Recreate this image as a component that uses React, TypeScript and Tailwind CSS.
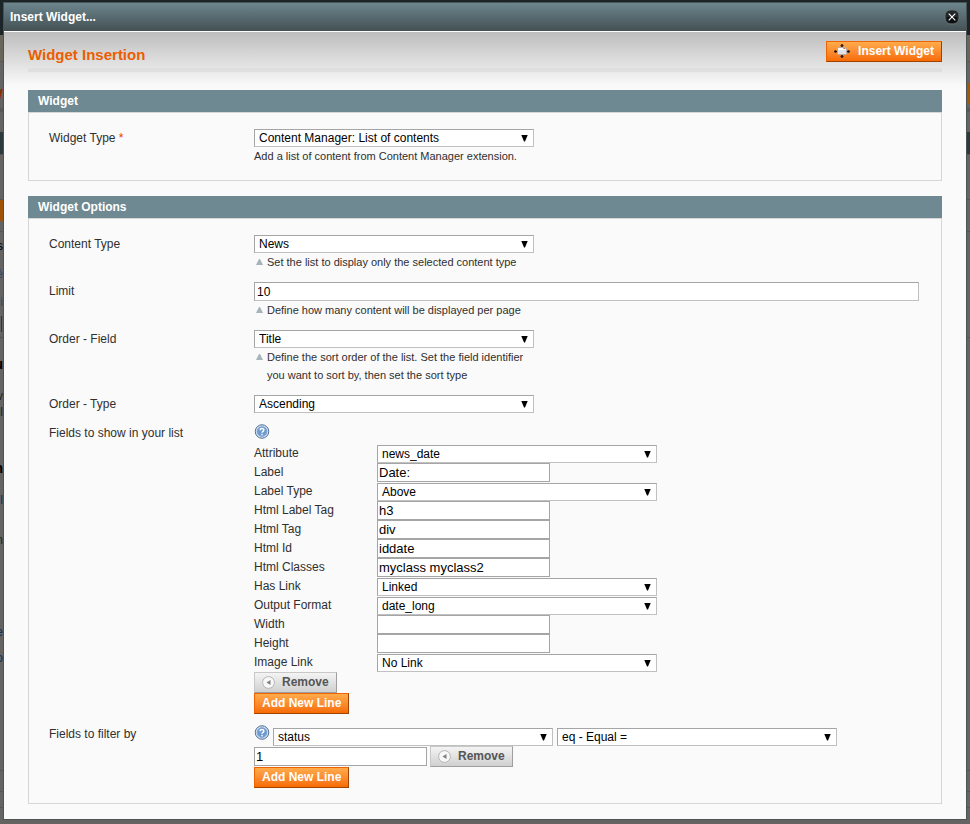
import React, { useId } from 'react';
import clsx from 'clsx';

interface SelectBoxProps {
  id?: string;
  label?: string;
  value: string;
}

interface LineField {
  label: string;
  type: 'select' | 'text';
  value: string;
}

const lineFields: LineField[] = [
  { label: 'Attribute', type: 'select', value: 'news_date' },
  { label: 'Label', type: 'text', value: 'Date:' },
  { label: 'Label Type', type: 'select', value: 'Above' },
  { label: 'Html Label Tag', type: 'text', value: 'h3' },
  { label: 'Html Tag', type: 'text', value: 'div' },
  { label: 'Html Id', type: 'text', value: 'iddate' },
  { label: 'Html Classes', type: 'text', value: 'myclass myclass2' },
  { label: 'Has Link', type: 'select', value: 'Linked' },
  { label: 'Output Format', type: 'select', value: 'date_long' },
  { label: 'Width', type: 'text', value: '' },
  { label: 'Height', type: 'text', value: '' },
  { label: 'Image Link', type: 'select', value: 'No Link' },
];

const inputBorder = 'border border-t-[#a5a5a5] border-l-[#a5a5a5] border-r-[#c0c0c0] border-b-[#c0c0c0]';

const SelectBox = ({ id, label, value }: SelectBoxProps) => (
  <div className="relative h-[18px] w-[280px] max-w-full">
    <select
      id={id}
      aria-label={label}
      defaultValue={value}
      className={clsx(inputBorder, 'block h-full w-full appearance-none bg-white pl-1 pr-5 text-xs/4 text-black')}
    >
      <option>{value}</option>
    </select>
    <svg viewBox="0 0 7 7" className="pointer-events-none absolute right-[6px] top-[6px] size-[7px]" aria-hidden="true">
      <path d="M.3 0h6.400L4 6.500H3z" fill="#000" />
    </svg>
  </div>
);

const TextBox = ({ id, label, value }: SelectBoxProps) => (
  <input
    id={id}
    type="text"
    aria-label={label}
    defaultValue={value}
    className="block h-[19px] w-[173px] border border-[#a5a5a5] bg-white px-px text-[13px]/4 text-black"
  />
);

const HelpIcon = () => (
  <svg viewBox="0 0 16 16" className="block h-[15px] w-4 shrink-0" role="img" aria-label="Help">
    <circle cx="8" cy="8" r="7.2" fill="#d3e2f3" stroke="#48658f" strokeWidth="1" />
    <circle cx="8" cy="8" r="5.2" fill="#6b9bd1" stroke="#7d9fcb" strokeWidth="0.8" />
    <path d="M6 6.600C6 4.200 10 4.200 10 6.500C10 7.900 8 7.800 8 9.400" fill="none" stroke="#fff" strokeWidth="1.500" />
    <circle cx="8" cy="11.300" r="0.900" fill="#fff" />
  </svg>
);

const RemoveButton = () => (
  <button
    type="button"
    className="flex h-[21px] items-center gap-[7px] border border-t-[#c8c8c8] border-l-[#c8c8c8] border-r-[#9f9f9f] border-b-[#9f9f9f] bg-linear-to-b from-[#f4f4f4] to-[#d0d0d0] px-[7px] text-xs/4 font-bold text-[#555]"
  >
    <svg viewBox="0 0 13 13" className="size-[13px]" aria-hidden="true">
      <circle cx="6.5" cy="6.5" r="5.9" fill="#f8f8f8" stroke="#b4b4b4" />
      <path d="M8.5 4v5L4.5 6.5z" fill="#808080" />
    </svg>
    <span className="pb-[2px]">Remove</span>
  </button>
);

const OrangeButton = ({ children }: { children: React.ReactNode }) => (
  <button
    type="button"
    className="flex h-[21px] shrink-0 items-center gap-2 border border-t-[#ed6502] border-l-[#ed6502] border-r-[#a04300] border-b-[#a04300] bg-linear-to-b from-[#ffab4a] to-[#f76b00] px-[7px] pb-[2px] text-xs/4 font-bold text-white"
  >
    {children}
  </button>
);

const Section = ({ title, children }: { title: string; children: React.ReactNode }) => (
  <section className="mb-[15px] last:mb-0">
    <h4 className="h-[22px] bg-[#6f8992] px-[10px] text-xs/[22px] font-bold text-white">{title}</h4>
    <div className="flex flex-col gap-[11px] border border-[#d6d6d6] bg-[#fafafa] pt-4 pr-[22px] pb-[15px] pl-5">
      {children}
    </div>
  </section>
);

const Row = ({ label, htmlFor, required, children }: {
  label: string;
  htmlFor?: string;
  required?: boolean;
  children: React.ReactNode;
}) => (
  <div className="flex">
    <label htmlFor={htmlFor} className="w-[205px] shrink-0 text-xs/[18px]">
      {label}
      {required && <span className="text-[#eb340a]"> *</span>}
    </label>
    <div className="min-w-0 flex-1">{children}</div>
  </div>
);

const Note = ({ children }: { children: React.ReactNode }) => (
  <p className="flex w-[280px] gap-1 pl-[2px] text-[11px]/[18px]">
    <svg viewBox="0 0 7 6" className="mt-[6px] h-[6px] w-[7px] shrink-0" aria-hidden="true">
      <path d="M3 0h1l3 6H0z" fill="#a5b5bb" />
    </svg>
    <span>{children}</span>
  </p>
);

const LineRow = ({ field }: { field: LineField }) => {
  const id = useId();
  return (
    <div className="flex h-[19px] items-end">
      <label htmlFor={id} className="w-[123px] shrink-0 text-xs/[19px]">{field.label}</label>
      {field.type === 'select' ? <SelectBox id={id} value={field.value} /> : <TextBox id={id} value={field.value} />}
    </div>
  );
};

// Dimmed admin page that stays visible around the dialog
const Backdrop = () => (
  <div className="absolute inset-0 overflow-hidden bg-[#656463]" aria-hidden="true">
    <div className="h-[35px] bg-[#1b2427]" />
    <div className="h-[27px] border-b border-[#5c584c] bg-[#68655a]" />
    <div className="flex h-[46px] items-end justify-between pb-1">
      <div className="flex w-[3px] justify-end overflow-hidden text-[15px]/5 font-bold text-[#8a3000]">W</div>
      <div className="h-[21px] w-10 bg-[#9a5a10]" />
    </div>
    <div className="h-1 bg-[#595959]" />
    <div className="mt-5 h-[22px] bg-[#2c3a3d]" />
    <div className="h-[46px] border-y border-[#555]" />
    <div className="h-[21px] w-10 bg-[#a05206]" />
    <div className="mt-[10px] flex h-[107px] w-full flex-col border-y border-[#555] text-xs/7">
      <div className="flex w-[3px] justify-end overflow-hidden text-black">s</div>
      <div className="flex w-[3px] justify-end overflow-hidden text-[#35466b]">é</div>
      <div className="flex w-[3px] justify-end overflow-hidden text-[#35466b]">i</div>
      <div className="h-4 w-[2px] border-r border-[#333]" />
    </div>
    <div className="flex h-[432px] w-[3px] flex-col items-end overflow-hidden pt-[18px] text-xs/4">
      <b className="mb-4 text-sm/4 text-black">u</b>
      <span className="text-[#222]">v</span>
      <span className="mb-10 text-[#222]">il</span>
      <b className="mb-4 text-sm/4 text-black">n</b>
      <span className="mb-6 text-[#102f60]">l</span>
      <span className="mb-[76px] text-[#222]">n</span>
      <span className="mb-[10px] text-[#102f60]">e</span>
      <span className="text-[#102f60]">o</span>
    </div>
    <div className="h-[22px] border-y border-[#555]" />
    <div className="h-4 border-b border-[#555]" />
  </div>
);

const App = () => (
  <div className="relative min-h-screen px-[3px] pt-[2px] pb-1 font-['Liberation_Sans',Arial,sans-serif] text-[#2f2f2f]">
    <Backdrop />
    <div role="dialog" aria-labelledby="dialog-title" className="relative border border-[#4b5355] bg-[#fafafa]">
      <div className="flex h-[29px] items-center justify-between border-b border-white bg-linear-to-b from-[#6c868e] to-[#445154] pr-[6px] pl-[6px]">
        <h2 id="dialog-title" className="text-xs/4 font-bold text-white">Insert Widget...</h2>
        <button type="button" aria-label="Close" className="pb-px">
          <svg viewBox="0 0 16 16" className="block size-4">
            <rect x="1" y="1" width="14" height="14" rx="5.500" fill="#20282a" stroke="#6e7375" />
            <path d="M3 8h10v2.500Q12.500 14 9 14H7Q3.500 14 3 10.500z" fill="#0c1011" />
            <path d="M4.700 4.700l6.600 6.600M11.300 4.700l-6.600 6.600" stroke="#fff" strokeWidth="1.100" />
          </svg>
        </button>
      </div>

      <form className="bg-[linear-gradient(#bdbdbd,#fafafa_54px)] px-6 pt-[9px] pb-[15px]" onSubmit={(e) => e.preventDefault()}>
        <div className="mb-[18px] flex items-start justify-between border-b-4 border-[#dfdfdf] pb-[2px]">
          <h3 className="pt-1 pb-px text-[15px]/5 font-bold text-[#eb5e00]">Widget Insertion</h3>
          <OrangeButton>
            <svg viewBox="0 0 16 14" className="h-[14px] w-4" aria-hidden="true">
              <path d="M8 0l1.500 1.500H8.600V3H7.400V1.500H6.500zM8 14l-1.500-1.500h.9V11h1.200v1.500h.9zM0 7.500L1.500 6v.9H3v1.200H1.500V9zM16 7.500L14.500 6v.9H13v1.200h1.500V9z" fill="#111" stroke="#111" strokeWidth="0.400" />
              <rect x="3.500" y="3.500" width="9" height="7" rx="1" fill="#dfe2e6" stroke="#b9aaa3" />
              <path d="M4 4h8v2H4z" fill="#fff" />
              <path d="M9.500 4h2v1h-2z" fill="#d8603c" />
            </svg>
            Insert Widget
          </OrangeButton>
        </div>

        <Section title="Widget">
          <Row label="Widget Type" htmlFor="widget-type" required>
            <SelectBox id="widget-type" value="Content Manager: List of contents" />
            <p className="text-[11px]/[18px]">Add a list of content from Content Manager extension.</p>
          </Row>
        </Section>

        <Section title="Widget Options">
          <Row label="Content Type" htmlFor="content-type">
            <SelectBox id="content-type" value="News" />
            <Note>Set the list to display only the selected content type</Note>
          </Row>
          <Row label="Limit" htmlFor="limit">
            <input
              id="limit"
              type="text"
              defaultValue="10"
              className={clsx(inputBorder, 'block h-[19px] w-full bg-white px-[2px] text-xs/4 text-black')}
            />
            <Note>Define how many content will be displayed per page</Note>
          </Row>
          <Row label="Order - Field" htmlFor="order-field">
            <SelectBox id="order-field" value="Title" />
            <Note>Define the sort order of the list. Set the field identifier you want to sort by, then set the sort type</Note>
          </Row>
          <Row label="Order - Type" htmlFor="order-type">
            <SelectBox id="order-type" value="Ascending" />
          </Row>
          <Row label="Fields to show in your list">
            <div className="h-5">
              <HelpIcon />
            </div>
            {lineFields.map((field) => (
              <LineRow key={field.label} field={field} />
            ))}
            <RemoveButton />
            <OrangeButton>Add New Line</OrangeButton>
          </Row>
          <Row label="Fields to filter by">
            <div className="flex h-[21px] items-end">
              <span className="mr-[3px] self-start"><HelpIcon /></span>
              <SelectBox label="Filter field" value="status" />
              <span className="w-1 shrink-0" />
              <SelectBox label="Filter condition" value="eq - Equal =" />
            </div>
            <div className="flex items-center gap-[3px]">
              <TextBox label="Filter value" value="1" />
              <RemoveButton />
            </div>
            <OrangeButton>Add New Line</OrangeButton>
          </Row>
        </Section>
      </form>
    </div>
  </div>
);

export default App;
